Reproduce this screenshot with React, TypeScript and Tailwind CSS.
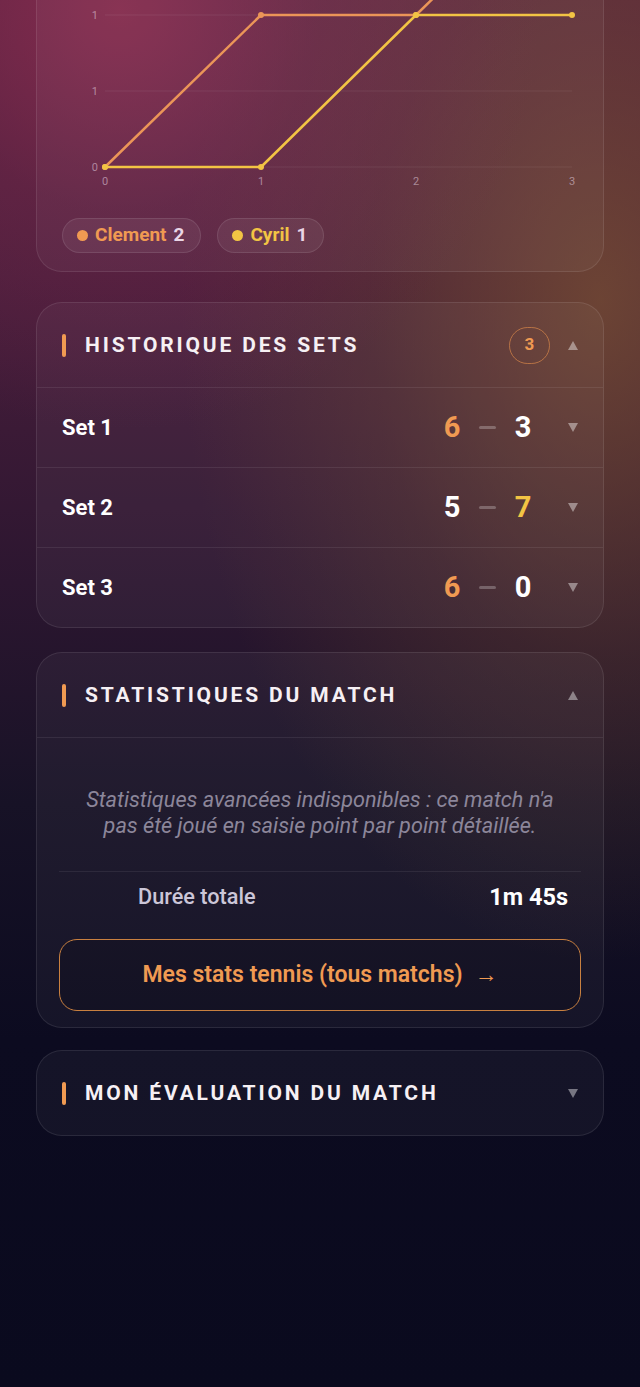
import React from "react";

const font = { fontFamily: "Roboto, 'Noto Sans', sans-serif" };

function Tri({ up }: { up?: boolean }) {
  return (
    <svg width="10" height="9" viewBox="0 0 10 9" className="shrink-0">
      {up ? (
        <polygon points="5,0 10,9 0,9" fill="rgba(255,255,255,0.42)" />
      ) : (
        <polygon points="0,0 10,0 5,9" fill="rgba(255,255,255,0.42)" />
      )}
    </svg>
  );
}

function Header({ title, badge, up }: { title: string; badge?: string; up?: boolean }) {
  return (
    <div className="flex h-[84px] items-center pl-[25px] pr-[25px]">
      <div className="h-[23px] w-[4px] rounded-full bg-[#f09a52]" />
      <div className="ml-[19px] flex-1 pt-[2px] text-[21px] font-bold uppercase tracking-[0.135em] text-[#f6f0f4]">
        {title}
      </div>
      {badge && (
        <div className="mr-[18px] flex h-[37px] w-[41px] items-center justify-center rounded-full border border-[#d9874a]/70 text-[17px] font-bold text-[#f09a52]">
          {badge}
        </div>
      )}
      <Tri up={up} />
    </div>
  );
}

function Chart() {
  const xs = [68, 224, 379, 535];
  const gy = [53, 129, 205, 281, 357];
  const labels: Record<number, string> = { 205: "1", 281: "1", 357: "0" };
  const orange = [357, 205, 205, 53];
  const yellow = [357, 357, 205, 205];
  const pts = (ys: number[]) => ys.map((y, i) => `${xs[i]},${y}`).join(" ");
  return (
    <svg width="568" height="385" viewBox="0 0 568 385" className="block">
      {gy.map((y) => (
        <line key={y} x1={68} x2={535} y1={y} y2={y} stroke="rgba(255,255,255,0.07)" strokeWidth="1" />
      ))}
      {[205, 281, 357].map((y) => (
        <text key={"l" + y} x={61} y={y + 4} textAnchor="end" fontSize="11" fill="rgba(230,210,225,0.55)" style={font}>
          {labels[y]}
        </text>
      ))}
      {xs.map((x, i) => (
        <text key={"x" + x} x={x} y={375} textAnchor="middle" fontSize="11" fill="rgba(230,210,225,0.55)" style={font}>
          {i}
        </text>
      ))}
      <polyline points={pts(orange)} fill="none" stroke="#eb9558" strokeWidth="2.5" strokeLinejoin="round" />
      {orange.map((y, i) => (
        <circle key={"o" + i} cx={xs[i]} cy={y} r="3" fill="#eb9558" />
      ))}
      <polyline points={pts(yellow)} fill="none" stroke="#f2c444" strokeWidth="2.5" strokeLinejoin="round" />
      {yellow.map((y, i) => (
        <circle key={"y" + i} cx={xs[i]} cy={y} r="3" fill="#f2c444" />
      ))}
    </svg>
  );
}

function Pill({ name, score, color }: { name: string; score: number; color: string }) {
  return (
    <div className="flex h-[35px] items-center gap-[7px] rounded-full border border-white/10 bg-white/[0.06] pl-[14px] pr-[16px]">
      <span className={`h-[11px] w-[11px] rounded-full ${color === "o" ? "bg-[#f09a52]" : "bg-[#f2c444]"}`} />
      <span className={`text-[19px] font-bold ${color === "o" ? "text-[#f09a52]" : "text-[#f2c444]"}`}>{name}</span>
      <span className="text-[19px] font-bold text-[#ead6e6]">{score}</span>
    </div>
  );
}

function SetRow({ label, a, b, ca, cb }: { label: string; a: number; b: number; ca: string; cb: string }) {
  return (
    <div className="flex h-[80px] items-center border-t border-white/[0.08] pl-[25px] pr-[25px]">
      <div className="flex-1 text-[22px] font-bold text-white">{label}</div>
      <div className={`w-[18px] text-center text-[29px] font-bold ${ca}`}>{a}</div>
      <div className="mx-[18px] h-[3px] w-[17px] rounded-full bg-white/25" />
      <div className={`w-[18px] text-center text-[29px] font-bold ${cb}`}>{b}</div>
      <div className="ml-[36px]">
        <Tri />
      </div>
    </div>
  );
}

export default function App() {
  return (
    <div
      style={font}
      className="min-h-[1387px] w-full overflow-hidden bg-[#0a0a1e] bg-[radial-gradient(circle_at_120px_10px,rgba(140,45,80,0.85)_0px,rgba(120,40,75,0.4)_200px,transparent_420px),radial-gradient(ellipse_330px_520px_at_600px_300px,rgba(120,80,50,0.75)_0px,rgba(100,65,45,0.35)_230px,transparent_420px),linear-gradient(180deg,#5c2442_0%,#4a1e3c_20%,#2c1630_42%,#171226_58%,#0c0b20_75%,#0a0a1e_100%)]"
    >
      <div className="mx-[36px] flex flex-col">
        <div className="-mt-[191px] overflow-hidden rounded-[26px] border border-white/[0.09] bg-white/[0.04]">
          <Chart />
          <div className="mt-[23px] flex gap-[16px] pb-[18px] pl-[25px]">
            <Pill name="Clement" score={2} color="o" />
            <Pill name="Cyril" score={1} color="y" />
          </div>
        </div>

        <div className="mt-[30px] overflow-hidden rounded-[26px] border border-white/[0.09] bg-white/[0.04]">
          <Header title="Historique des sets" badge="3" up />
          <SetRow label="Set 1" a={6} b={3} ca="text-[#f09a52]" cb="text-white" />
          <SetRow label="Set 2" a={5} b={7} ca="text-white" cb="text-[#f2c444]" />
          <SetRow label="Set 3" a={6} b={0} ca="text-[#f09a52]" cb="text-white" />
        </div>

        <div className="mt-[24px] overflow-hidden rounded-[26px] border border-white/[0.09] bg-white/[0.04]">
          <Header title="Statistiques du match" up />
          <div className="border-t border-white/[0.08] px-[22px] pb-[16px] pt-[49px]">
            <p className="px-[18px] text-center text-[21.7px] italic leading-[26px] text-[#8c869a]">
              Statistiques avancées indisponibles : ce match n'a pas été joué en saisie point par point détaillée.
            </p>
            <div className="mt-[32px] flex h-[52px] items-center border-t border-white/[0.07] pl-[79px] pr-[13px]">
              <div className="flex-1 text-[21.7px] font-medium text-[#cbc6d8]">Durée totale</div>
              <div className="text-[23.5px] font-bold text-white">1m 45s</div>
            </div>
            <div className="mt-[16px] flex h-[72px] items-center justify-center gap-[12px] rounded-[18px] border-[1.5px] border-[#c98040] bg-black/10 text-[23px] font-semibold text-[#f09a52]">
              <span>Mes stats tennis (tous matchs)</span>
              <span>→</span>
            </div>
          </div>
        </div>

        <div className="mt-[22px] overflow-hidden rounded-[26px] border border-white/[0.09] bg-white/[0.04]">
          <Header title="Mon évaluation du match" />
        </div>
      </div>
    </div>
  );
}
